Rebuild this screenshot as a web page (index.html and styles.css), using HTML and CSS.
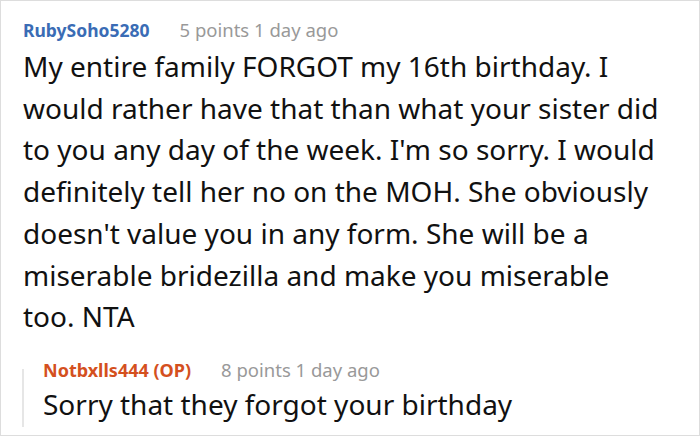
FILE: index.html
```html
<!DOCTYPE html>
<html>
<head>
<meta charset="utf-8">
<link rel="stylesheet" href="styles.css">
</head>
<body>
<div class="frame">
  <div class="comment">
    <div class="meta"><span class="user">RubySoho5280</span><span class="info">5 points 1 day ago</span></div>
    <p class="text">My entire family FORGOT my 16th birthday. I<br>would rather have that than what your sister did<br>to you any day of the week. I'm so sorry. I would<br>definitely tell her no on the MOH. She obviously<br>doesn't value you in any form. She will be a<br>miserable bridezilla and make you miserable<br>too. NTA</p>
  </div>
  <div class="reply">
    <div class="meta"><span class="user op">Notbxlls444 (OP)</span><span class="info">8 points 1 day ago</span></div>
    <div class="reply-body">
      <p class="text">Sorry that they forgot your birthday</p>
    </div>
  </div>
</div>
</body>
</html>
```
FILE: styles.css
```css
html, body { margin: 0; padding: 0; background: #fff; }
.frame {
  width: 700px;
  height: 436px;
  box-sizing: border-box;
  border: 1px solid #ddd;
  padding: 17px 4px 0 22px;
  font-family: "Noto Sans", sans-serif;
  color: #111;
}
.meta {
  line-height: 24px;
  height: 24px;
  display: flex;
  align-items: baseline;
  gap: 30px;
}
.user { font-weight: 700; font-size: 17.5px; color: #3a6cb5; }
.user.op { color: #d4501e; font-size: 18px; }
.info { color: #999; font-size: 18.5px; }
.text {
  margin: 0;
  font-size: 28px;
  line-height: 41.7px;
  white-space: nowrap;
}
.comment .text { margin-top: 4px; }
.reply {
  margin-top: 20px;
  padding-left: 20px;
  position: relative;
}
.reply::before {
  content: "";
  position: absolute;
  left: -1px;
  top: 11px;
  bottom: -1px;
  border-left: 2px solid #e6e6e6;
}
.reply .text { margin-top: 2px; }
```
